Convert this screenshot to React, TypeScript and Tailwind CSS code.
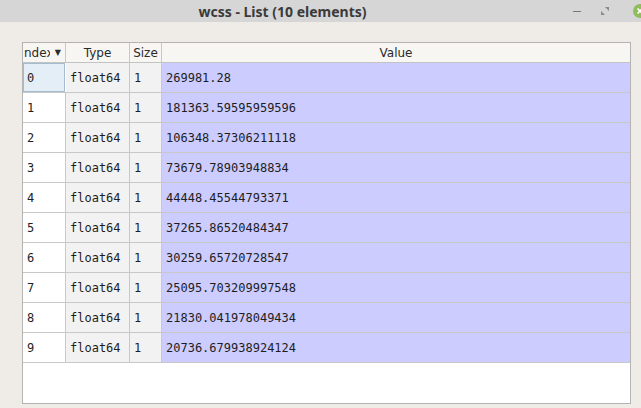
const rows = [
  '269981.28',
  '181363.59595959596',
  '106348.37306211118',
  '73679.78903948834',
  '44448.45544793371',
  '37265.86520484347',
  '30259.65720728547',
  '25095.703209997548',
  '21830.041978049434',
  '20736.679938924124',
];

const mono = { fontFamily: '"DejaVu Sans Mono", "Liberation Mono", monospace' };

export default function App() {
  return (
    <div className="w-[641px] h-[408px] overflow-hidden bg-[#efece8] flex flex-col" style={{ fontFamily: '"DejaVu Sans", sans-serif' }}>
      <div className="h-[22px] bg-[#d6d6d6] flex items-center relative shrink-0">
        <div className="flex-1 text-center text-[14px] font-bold text-[#3b3b3b]" style={{ fontFamily: '"Noto Sans", sans-serif' }}>
          <span className="relative left-[-38px]">wcss - List (10 elements)</span>
        </div>
        <div className="absolute right-0 top-0 h-[22px] flex items-center">
          <span className="w-[8px] h-[1px] bg-[#777] mr-[20px]" />
          <svg width="8" height="8" viewBox="0 0 8 8" className="mr-[24px]">
            <path d="M4 0h4v4z M0 4v4h4z" fill="#8a8a8a" />
          </svg>
          <svg width="14" height="14" viewBox="0 0 14 14" className="mr-[-6px]">
            <circle cx="7" cy="7" r="7" fill="#8fbc5c" />
            <path d="M4.5 4.5l5 5M9.5 4.5l-5 5" stroke="#fff" strokeWidth="1.6" />
          </svg>
        </div>
      </div>
      <div className="flex-1 pt-[20px] pl-[22px] pr-[10px] pb-[4px] flex">
        <div className="flex-1 border border-[#b4b4b4] bg-white flex flex-col">
          <div className="grid grid-cols-[43px_64px_32px_1fr] h-[20px] bg-[#f8f6f2] border-b border-[#c3c3c3] text-[12px] text-[#2a2a2a]">
            <div className="border-r border-[#c8c8c8] flex items-center justify-between overflow-hidden pl-[1px] pr-[4px]">
              <span className="w-[26px] overflow-hidden whitespace-nowrap">ndex</span>
              <span className="text-[8px]">▼</span>
            </div>
            <div className="border-r border-[#c8c8c8] flex items-center justify-center">Type</div>
            <div className="border-r border-[#c8c8c8] flex items-center justify-center">Size</div>
            <div className="flex items-center justify-center">Value</div>
          </div>
          {rows.map((v, i) => (
            <div key={i} className="grid grid-cols-[43px_64px_32px_1fr] h-[30px] border-b border-[#c8c8c8] text-[12px] text-[#1e1e1e]" style={mono}>
              <div className={i === 0 ? 'bg-[#e3eef7] shadow-[inset_0_0_0_1px_#a3bccf] flex items-center pl-[4px] mr-[1px]' : 'border-r border-[#c8c8c8] bg-white flex items-center pl-[4px]'}>
                {i}
              </div>
              <div className="border-r border-[#c8c8c8] bg-[#f2f2f2] flex items-center pl-[4px]">float64</div>
              <div className="border-r border-[#c8c8c8] bg-[#f2f2f2] flex items-center pl-[4px]">1</div>
              <div className="bg-[#ccccff] flex items-center pl-[4px]">{v}</div>
            </div>
          ))}
        </div>
      </div>
    </div>
  );
}
